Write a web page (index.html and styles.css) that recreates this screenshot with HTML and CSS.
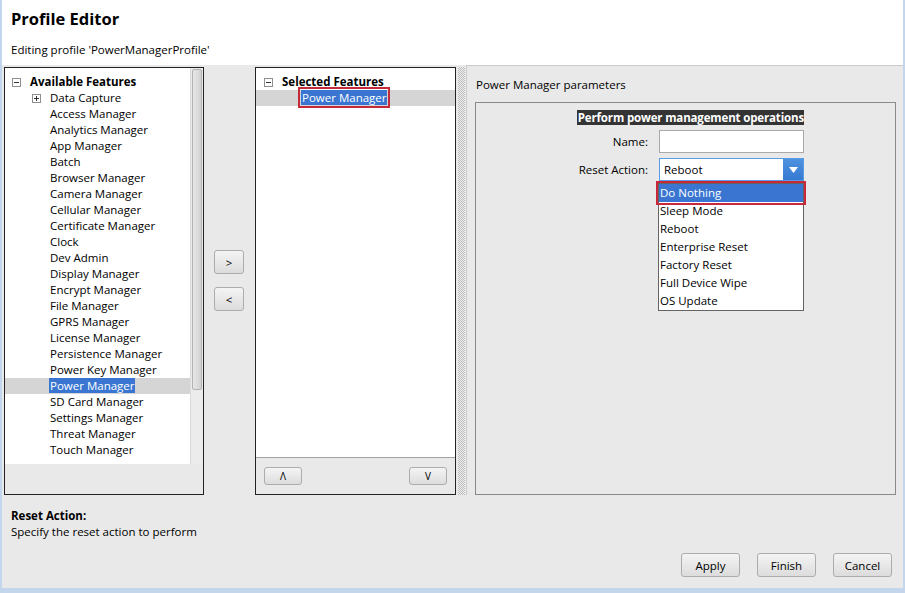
FILE: index.html
```html
<!DOCTYPE html>
<html lang="en">
<head>
  <meta charset="UTF-8">
  <title>Profile Editor</title>
  <link rel="stylesheet" href="styles.css">
</head>
<body>
  <div class="window">
    <!-- Header -->
    <header class="top">
      <h1>Profile Editor</h1>
      <p>Editing profile 'PowerManagerProfile'</p>
    </header>

    <div class="work">
      <!-- Available features -->
      <div class="panel features">
        <div class="tree-wrap">
          <ul class="tree">
            <li class="lvl0 root"><span class="exp"></span>Available Features</li>
            <li class="lvl1"><span class="exp plus"></span>Data Capture</li>
            <li class="leaf">Access Manager</li>
            <li class="leaf">Analytics Manager</li>
            <li class="leaf">App Manager</li>
            <li class="leaf">Batch</li>
            <li class="leaf">Browser Manager</li>
            <li class="leaf">Camera Manager</li>
            <li class="leaf">Cellular Manager</li>
            <li class="leaf">Certificate Manager</li>
            <li class="leaf">Clock</li>
            <li class="leaf">Dev Admin</li>
            <li class="leaf">Display Manager</li>
            <li class="leaf">Encrypt Manager</li>
            <li class="leaf">File Manager</li>
            <li class="leaf">GPRS Manager</li>
            <li class="leaf">License Manager</li>
            <li class="leaf">Persistence Manager</li>
            <li class="leaf">Power Key Manager</li>
            <li class="leaf current"><span class="hl">Power Manager</span></li>
            <li class="leaf">SD Card Manager</li>
            <li class="leaf">Settings Manager</li>
            <li class="leaf">Threat Manager</li>
            <li class="leaf">Touch Manager</li>
          </ul>
          <div class="vscroll"><div class="thumb"></div></div>
        </div>
      </div>

      <!-- Add / remove -->
      <div class="move-col">
        <button class="btn move">&gt;</button>
        <button class="btn move">&lt;</button>
      </div>

      <!-- Selected features -->
      <div class="panel selected-box">
        <div class="tree-wrap">
          <ul class="tree">
            <li class="lvl0 root"><span class="exp"></span>Selected Features</li>
            <li class="sel-item current"><span class="hl boxed">Power Manager</span></li>
          </ul>
        </div>
        <div class="order-bar">
          <button class="btn order">&#923;</button>
          <button class="btn order">V</button>
        </div>
      </div>

      <div class="splitter"></div>

      <!-- Parameters -->
      <div class="params">
        <div class="params-title">Power Manager parameters</div>
        <div class="group">
          <div class="form">
            <div class="form-head">Perform power management operations</div>
            <label>Name:</label>
            <div class="field"></div>
            <label>Reset Action:</label>
            <div class="combo">
              <span class="combo-value">Reboot</span>
              <span class="combo-arrow">
                <svg width="9" height="6" viewBox="0 0 9 6"><polygon points="0,0 9,0 4.5,6" fill="#fff"/></svg>
              </span>
              <ul class="dropdown">
                <li class="active">Do Nothing</li>
                <li>Sleep Mode</li>
                <li>Reboot</li>
                <li>Enterprise Reset</li>
                <li>Factory Reset</li>
                <li>Full Device Wipe</li>
                <li>OS Update</li>
              </ul>
            </div>
          </div>
        </div>
      </div>
    </div>

    <!-- Help -->
    <div class="help">
      <b>Reset Action:</b>
      <p>Specify the reset action to perform</p>
    </div>

    <!-- Buttons -->
    <div class="actions">
      <button class="btn action">Apply</button>
      <button class="btn action">Finish</button>
      <button class="btn action">Cancel</button>
    </div>
  </div>
</body>
</html>
```
FILE: styles.css
```css
/* Reset */
* {
  margin: 0;
  padding: 0;
  box-sizing: border-box;
}
body {
  font-family: "Open Sans", "Noto Sans", sans-serif;
  font-size: 11.5px;
  color: #000;
  background: #e9e9e9;
}

/* Window */
.window {
  width: 905px;
  height: 593px;
  background: #e9e9e9;
  border-left: 2px solid #c4d6eb;
  border-right: 2px solid #c4d6eb;
  border-bottom: 5px solid #c4d6eb;
  display: flex;
  flex-direction: column;
}

/* Header */
.top {
  background: #fff;
  height: 65px;
  padding: 8px 0 0 9px;
}
.top h1 {
  font-size: 16.5px;
  font-weight: 700;
  line-height: 22px;
}
.top p {
  margin-top: 12px;
  line-height: 16px;
}

/* Work area */
.work {
  display: flex;
  height: 428px;
  margin-top: 2px;
  padding-left: 2px;
}
.panel {
  border: 1px solid #222;
  display: flex;
  flex-direction: column;
}
.features {
  width: 200px;
}
.selected-box {
  width: 201px;
}
.tree-wrap {
  display: flex;
  background: #fff;
}
.features .tree-wrap {
  height: 396px;
}
.selected-box .tree-wrap {
  height: 390px;
  border-bottom: 1px solid #a3a3a3;
}

/* Tree */
.tree {
  list-style: none;
  flex: 1;
  padding-top: 6px;
}
.tree li {
  height: 16px;
  line-height: 16px;
  white-space: nowrap;
}
.tree .root {
  font-weight: 700;
}
.features .lvl0 {
  padding-left: 7px;
}
.selected-box .lvl0 {
  padding-left: 8px;
}
.lvl1 {
  padding-left: 27px;
}
.leaf {
  padding-left: 45px;
}
.sel-item {
  padding-left: 46px;
}
.tree li.current {
  background: #d5d5d5;
}
.exp {
  display: inline-block;
  width: 9px;
  height: 9px;
  border: 1px solid #8f8f8f;
  margin-right: 9px;
  vertical-align: -1px;
  position: relative;
  background: #fff;
}
.exp::before {
  content: "";
  position: absolute;
  left: 1px;
  right: 1px;
  top: 3px;
  height: 1px;
  background: #333;
}
.exp.plus::after {
  content: "";
  position: absolute;
  top: 1px;
  bottom: 1px;
  left: 3px;
  width: 1px;
  background: #333;
}
.hl {
  background: #3a76d1;
  color: #fff;
  padding: 0 1px;
  margin-left: -1px;
}
.hl.boxed {
  outline: 2px solid #c32a3a;
  outline-offset: 1px;
}

/* Scrollbar */
.vscroll {
  width: 13px;
  background: #ececec;
  border-left: 1px solid #dcdcdc;
  padding: 1px;
}
.vscroll .thumb {
  height: 321px;
  background: linear-gradient(to right, #e6e6e6, #d3d3d3);
  border: 1px solid #b2b2b2;
  border-radius: 2px;
}

/* Buttons */
.btn {
  font-family: inherit;
  font-size: 11.5px;
  color: #000;
  background: linear-gradient(#f4f4f4, #dcdcdc);
  border: 1px solid #acacac;
  border-radius: 3px;
}
.move-col {
  width: 51px;
  display: flex;
  flex-direction: column;
  gap: 13px;
  padding: 183px 0 0 10px;
}
.btn.move {
  width: 30px;
  height: 24px;
}
.order-bar {
  flex: 1;
  display: flex;
  justify-content: space-between;
  align-items: center;
  padding: 0 8px;
}
.btn.order {
  width: 38px;
  height: 18px;
  font-size: 10px;
  line-height: 1;
}

/* Splitter */
.splitter {
  width: 7px;
  margin: 0 1px 0 2px;
  background: repeating-conic-gradient(#bcbcbc 0 25%, #efefef 0 50%) 0 0 / 2px 2px;
}

/* Parameters */
.params {
  flex: 1;
  margin-top: -2px;
  border-left: 1px solid #cbcbcb;
  border-top: 1px solid #cbcbcb;
  padding: 11px 0 0 9px;
  display: flex;
  flex-direction: column;
}
.params-title {
  line-height: 16px;
}
.group {
  margin: 9px 0 0 -1px;
  width: 421px;
  flex: 1;
  border: 1px solid #8a8a8a;
}
.form {
  display: grid;
  grid-template-columns: 70px 145px;
  column-gap: 11px;
  row-gap: 5px;
  align-items: center;
  width: 226px;
  margin: 7px 0 0 102px;
}
.form-head {
  grid-column: 1 / -1;
  justify-self: end;
  white-space: nowrap;
  letter-spacing: -0.15px;
  background: #343434;
  color: #fff;
  font-weight: 700;
  line-height: 15px;
  padding-left: 1px;
}
.form label {
  text-align: right;
}
.field {
  height: 23px;
  background: #fff;
  border: 1px solid #a9a9a9;
}
.combo {
  position: relative;
  height: 23px;
  display: flex;
  background: #fff;
  border: 1px solid #569de5;
}
.combo-value {
  flex: 1;
  line-height: 21px;
  padding-left: 4px;
}
.combo-arrow {
  width: 20px;
  background: linear-gradient(#4f92e0, #3579d2);
  display: flex;
  align-items: center;
  justify-content: center;
}

/* Dropdown list */
.dropdown {
  position: absolute;
  top: 24px;
  left: -2px;
  width: 146px;
  list-style: none;
  background: #fff;
  border: 1px solid #646464;
  z-index: 2;
}
.dropdown li {
  height: 18px;
  line-height: 18px;
  padding-left: 1px;
}
.dropdown li.active {
  background: #3a76d1;
  color: #fff;
  outline: 2px solid #c8283a;
  outline-offset: 1px;
}

/* Help + actions */
.help {
  margin-top: 13px;
  padding-left: 9px;
  line-height: 16px;
}
.actions {
  display: flex;
  justify-content: flex-end;
  gap: 17px;
  margin-top: 13px;
  padding-right: 11px;
}
.btn.action {
  width: 59px;
  height: 24px;
}
```
